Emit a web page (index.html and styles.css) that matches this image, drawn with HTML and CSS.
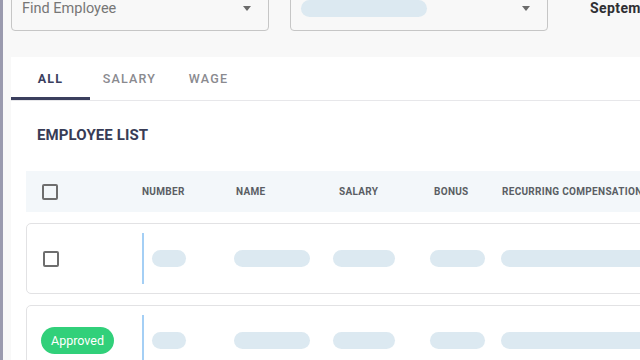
FILE: index.html
```html
<!DOCTYPE html>
<html>
<head>
<meta charset="utf-8">
<link rel="stylesheet" href="styles.css">
</head>
<body>
<div class="page">
  <div class="filters">
    <div class="select">
      <span class="placeholder">Find Employee</span>
      <span class="caret"></span>
    </div>
    <div class="select">
      <span class="skel skel-select"></span>
      <span class="caret"></span>
    </div>
    <div class="month">Septem</div>
  </div>

  <div class="card">
    <div class="tabs">
      <div class="tab active">ALL</div>
      <div class="tab">SALARY</div>
      <div class="tab">WAGE</div>
    </div>
    <div class="card-body">
      <h2 class="title">EMPLOYEE LIST</h2>
      <div class="thead">
        <div class="cell-check"><span class="checkbox"></span></div>
        <div class="th">NUMBER</div>
        <div class="th">NAME</div>
        <div class="th">SALARY</div>
        <div class="th">BONUS</div>
        <div class="th">RECURRING COMPENSATION</div>
      </div>
      <div class="row">
        <div class="cell-check"><span class="checkbox"></span></div>
        <div class="cell-num"><span class="divider"></span><span class="skel w-num"></span></div>
        <div class="cell"><span class="skel w-name"></span></div>
        <div class="cell"><span class="skel w-salary"></span></div>
        <div class="cell"><span class="skel w-bonus"></span></div>
        <div class="cell"><span class="skel w-rec"></span></div>
      </div>
      <div class="row">
        <div class="cell-check badge-cell"><span class="badge">Approved</span></div>
        <div class="cell-num"><span class="divider"></span><span class="skel w-num"></span></div>
        <div class="cell"><span class="skel w-name"></span></div>
        <div class="cell"><span class="skel w-salary"></span></div>
        <div class="cell"><span class="skel w-bonus"></span></div>
        <div class="cell"><span class="skel w-rec"></span></div>
      </div>
    </div>
  </div>
</div>
</body>
</html>
```

FILE: styles.css
```css
* { box-sizing: border-box; }

html, body {
  margin: 0;
  width: 640px;
  height: 360px;
  overflow: hidden;
}

body {
  background: #f8f8f8;
  border-left: 3px solid #9a9aae;
  font-family: Roboto, "Liberation Sans", sans-serif;
}

.page {
  padding-left: 8px;
  width: 760px;
}

.filters {
  display: flex;
  align-items: center;
  height: 46px;
  margin-top: -15px;
}

.select {
  width: 258px;
  height: 46px;
  border: 1px solid #c6c6c6;
  border-radius: 4px;
  display: flex;
  align-items: center;
  justify-content: space-between;
  padding: 0 17px 0 10px;
  margin-right: 21px;
}

.placeholder {
  font-size: 14.5px;
  color: #767676;
}

.caret {
  width: 0;
  height: 0;
  border-left: 4.5px solid transparent;
  border-right: 4.5px solid transparent;
  border-top: 5px solid #6b6b6b;
}

.month {
  margin-left: 21px;
  font-size: 14px;
  font-weight: 700;
  color: #2f2f33;
  letter-spacing: 0.4px;
  margin-top: -1px;
}

.card {
  margin-top: 26px;
  background: #ffffff;
  width: 760px;
}

.tabs {
  display: flex;
  height: 44px;
  border-bottom: 1px solid #e7e7ea;
}

.tab {
  width: 79px;
  height: 43px;
  display: flex;
  align-items: center;
  justify-content: center;
  font-size: 12.5px;
  font-weight: 500;
  letter-spacing: 1.2px;
  color: #8a8a8f;
  border-bottom: 3px solid transparent;
  padding-top: 3px;
}

.tab.active {
  color: #3b3f5e;
  border-bottom-color: #3b3f5e;
  font-weight: 700;
}

.card-body {
  padding-left: 15px;
}

.title {
  margin: 25px 0 27px 11px;
  font-size: 15px;
  line-height: 18px;
  font-weight: 700;
  color: #383c56;
  letter-spacing: 0.1px;
}

.thead {
  display: grid;
  grid-template-columns: 116px 94px 103px 95px 68px 1fr;
  align-items: center;
  height: 41px;
  background: #f3f7fa;
  margin-bottom: 11px;
}

.th {
  font-size: 10px;
  font-weight: 700;
  color: #5a5e64;
  letter-spacing: 0.3px;
  white-space: nowrap;
}

.cell-check {
  padding-left: 16px;
  display: flex;
  align-items: center;
}

.checkbox {
  width: 16px;
  height: 16px;
  border: 2px solid #6e6e6e;
  border-radius: 2px;
}

.row {
  display: grid;
  grid-template-columns: 115px 92px 99px 97px 71px 1fr;
  align-items: center;
  height: 71px;
  border: 1px solid #e2e2e4;
  border-radius: 5px;
  background: #ffffff;
  margin-bottom: 11px;
  padding: 9px 0;
}

.badge-cell {
  padding-left: 14px;
}

.badge {
  display: inline-flex;
  align-items: center;
  justify-content: center;
  width: 73px;
  height: 27px;
  border-radius: 14px;
  background: #31d07a;
  color: #ffffff;
  font-size: 12.5px;
}

.cell-num {
  display: flex;
  align-items: center;
  height: 51px;
}

.divider {
  width: 2px;
  height: 51px;
  background: #a4cff5;
  margin-right: 8px;
}

.skel {
  display: block;
  height: 17px;
  border-radius: 9px;
  background: #dce9f1;
}

.skel-select {
  width: 126px;
}

.w-num { width: 34px; }
.w-name { width: 76px; }
.w-salary { width: 62px; }
.w-bonus { width: 55px; }
.w-rec { width: 220px; }
```
